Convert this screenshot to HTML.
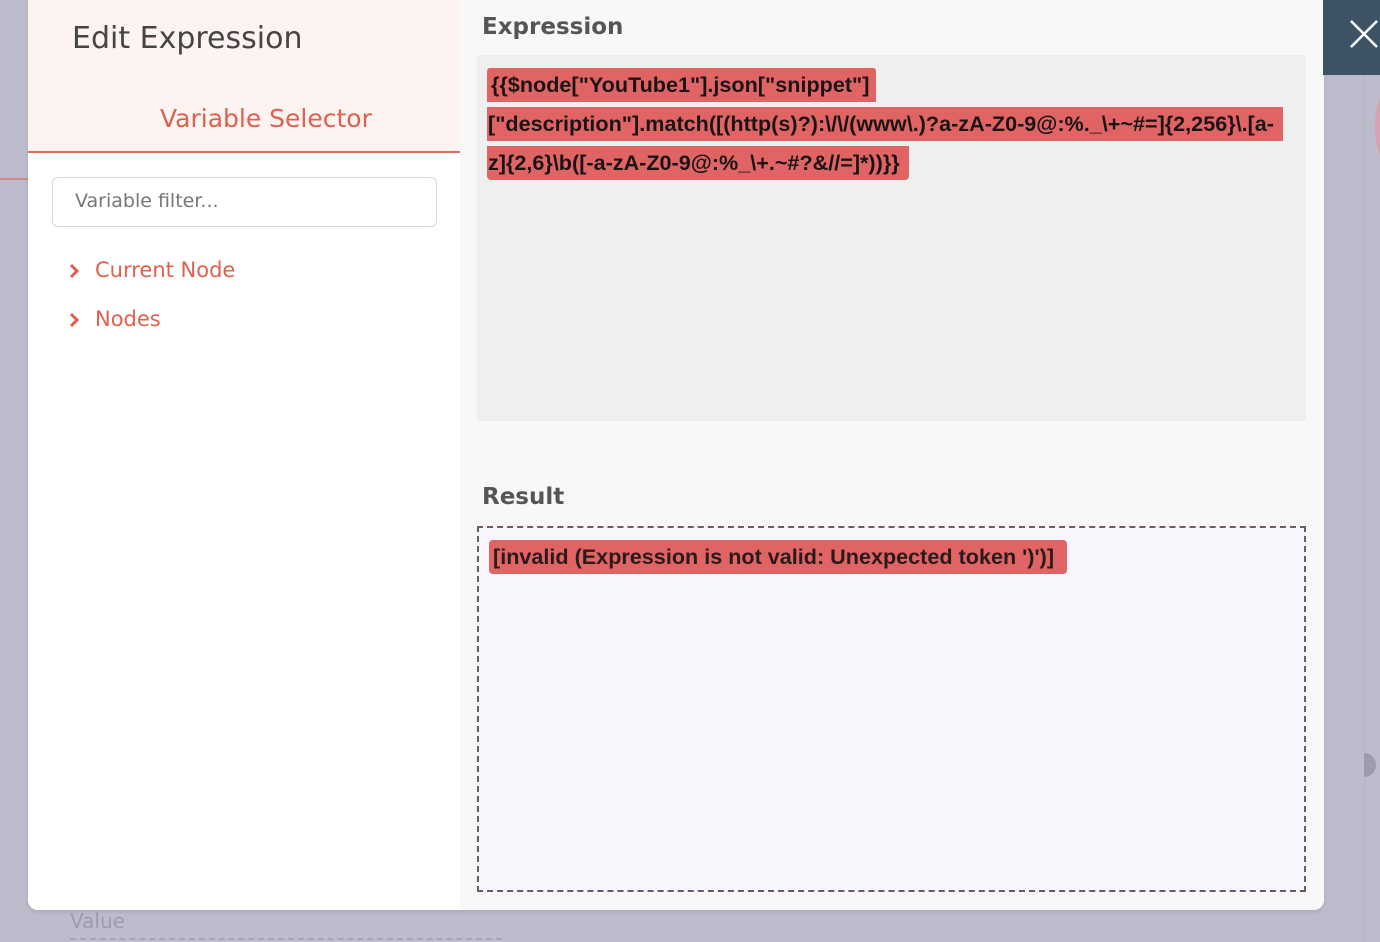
<!DOCTYPE html>
<html><head><meta charset="utf-8"><style>
*{margin:0;padding:0;box-sizing:border-box}
body{width:1380px;height:942px;overflow:hidden;background:#bdbccc;position:relative;font-family:"Liberation Sans","DejaVu Sans",sans-serif}
.abs{position:absolute}
.os{font-family:"DejaVu Sans","Liberation Sans",sans-serif}
.hl{position:absolute;background:#e06464;color:#1c1414;font-weight:bold;font-size:21.6px;line-height:34px;white-space:nowrap;padding-left:4px;overflow:hidden}
</style></head><body>
<div class="abs" style="left:0;top:178px;width:28px;height:2px;background:#d68a8a"></div>
<div class="abs" style="left:1364px;top:0;width:1px;height:942px;background:#b3b2c3"></div>
<div class="abs" style="left:1375px;top:95px;width:20px;height:64px;border-radius:50%;background:#d5a2ad"></div>
<div class="abs" style="left:1364px;top:753px;width:12px;height:24px;border-radius:0 12px 12px 0;background:#9c9cae"></div>
<div class="abs os" style="left:70px;top:909px;font-size:20px;color:#9d9cae">Value</div>
<div class="abs" style="left:70px;top:938px;width:432px;border-top:2px dashed #a6a5b8"></div>

<div class="abs" style="left:28px;top:0;width:1296px;height:910px;background:#f8f8f8;border-radius:0 0 10px 10px;box-shadow:0 2px 4px rgba(0,0,0,.1);overflow:hidden">
  <div class="abs" style="left:0;top:0;width:432px;height:910px;background:#fff"></div>
  <div class="abs" style="left:0;top:0;width:432px;height:151px;background:#fdf3f1"></div>
  <div class="abs" style="left:0;top:151px;width:432px;height:2px;background:#df6b5d"></div>
  <div class="abs os" style="left:44px;top:21px;font-size:30px;color:#444">Edit Expression</div>
  <div class="abs os" style="left:132px;top:104px;font-size:25px;color:#e0604f">Variable Selector</div>
  <div class="abs os" style="left:24px;top:177px;width:385px;height:50px;border:1px solid #d8d8dc;border-radius:6px;background:#fff;padding:12px 0 0 22px;font-size:19px;color:#777">Variable filter...</div>
  <svg class="abs" style="left:40px;top:263px" width="12" height="16" viewBox="0 0 12 16"><path d="M3 2L9 8L3 14" stroke="#e0604f" stroke-width="3" fill="none"/></svg>
  <div class="abs os" style="left:67px;top:258px;font-size:21px;color:#e0604f">Current Node</div>
  <svg class="abs" style="left:40px;top:312px" width="12" height="16" viewBox="0 0 12 16"><path d="M3 2L9 8L3 14" stroke="#e0604f" stroke-width="3" fill="none"/></svg>
  <div class="abs os" style="left:67px;top:307px;font-size:21px;color:#e0604f">Nodes</div>

  <div class="abs os" style="left:454px;top:14px;font-size:23px;color:#555;font-weight:bold">Expression</div>
  <div class="abs" style="left:449px;top:55px;width:829px;height:366px;background:#efefef"></div>
  <div class="hl" style="left:459px;top:68px;width:389px;border-radius:3px 3px 0 0">{{$node["YouTube1"].json["snippet"]</div>
  <div class="hl" style="left:459px;top:107px;width:796px;padding-left:1px">["description"].match([(http(s)?):\/\/(www\.)?a-zA-Z0-9@:%._\+~#=]{2,256}\.[a-</div>
  <div class="hl" style="left:459px;top:146px;width:422px;padding-left:1px;border-radius:0 0 4px 4px">z]{2,6}\b([-a-zA-Z0-9@:%_\+.~#?&amp;//=]*))}}</div>

  <div class="abs os" style="left:454px;top:484px;font-size:23px;color:#555;font-weight:bold">Result</div>
  <div class="abs" style="left:449px;top:526px;width:829px;height:366px;border:2px dashed #6e5a66;background:#f7f6fd"></div>
  <div class="hl" style="left:461px;top:540px;width:578px;border-radius:4px;font-weight:bold;color:#2a1a1a">[invalid (Expression is not valid: Unexpected token ')')]</div>
</div>

<div class="abs" style="left:1323px;top:0;width:57px;height:75px;background:#3d5264"></div>
<svg class="abs" style="left:1348px;top:18px" width="32" height="32" viewBox="0 0 32 32"><path d="M3 3L29 29M29 3L3 29" stroke="#fff" stroke-width="2.6" fill="none"/></svg>
</body></html>
